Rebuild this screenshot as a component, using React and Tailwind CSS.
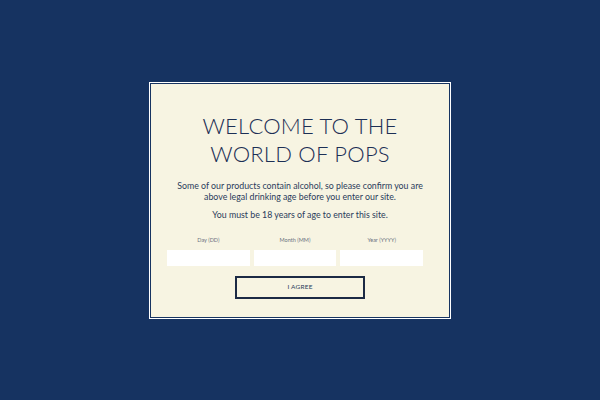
import { useState } from 'react';

const FIELDS = [
  { key: 'day', label: 'Day (DD)' },
  { key: 'month', label: 'Month (MM)' },
  { key: 'year', label: 'Year (YYYY)' },
];

export default function App() {
  const [dob, setDob] = useState({ day: '', month: '', year: '' });

  return (
    <div className="flex min-h-[400px] w-full items-center justify-center bg-[#163361]" style={{ fontFamily: 'Lato, "Open Sans", sans-serif' }}>
      {/* Age gate */}
      <div className="w-[302px] border border-white bg-[#163361] p-px">
        <div className="flex flex-col items-center bg-[#f7f4e2] pb-[18px] pt-[28px] text-center text-[#1c2f55]">
          <h1 className="text-[22px] font-light leading-[28px] tracking-[0.01em]">
            WELCOME TO THE<br />WORLD OF POPS
          </h1>
          <p className="mt-[12px] w-[262px] text-[8.8px] leading-[11px] text-[#2a3b5b]">
            Some of our products contain alcohol, so please confirm you are above legal drinking age before you enter our site.
          </p>
          <p className="mt-[7px] text-[8.8px] leading-[11px] text-[#2a3b5b]">You must be 18 years of age to enter this site.</p>

          <div className="mr-[10px] mt-[16px] grid w-[256px] grid-cols-3 gap-[4px]">
            {FIELDS.map(f => (
              <label key={f.key} className="flex flex-col items-center">
                <span className="text-[5.5px] leading-[8px] text-[#6b7180]">{f.label}</span>
                <input
                  value={dob[f.key]}
                  onChange={(e) => setDob({ ...dob, [f.key]: e.target.value })}
                  className="mt-[6px] h-[16px] w-full border-0 bg-white px-1 text-[8px] outline-none"
                />
              </label>
            ))}
          </div>

          <button className="mt-[10px] h-[23px] w-[130px] border-2 border-[#1c2a44] text-[6.5px] leading-none tracking-[0.03em] text-[#2a3b5b]">
            I AGREE
          </button>
        </div>
      </div>
    </div>
  );
}
